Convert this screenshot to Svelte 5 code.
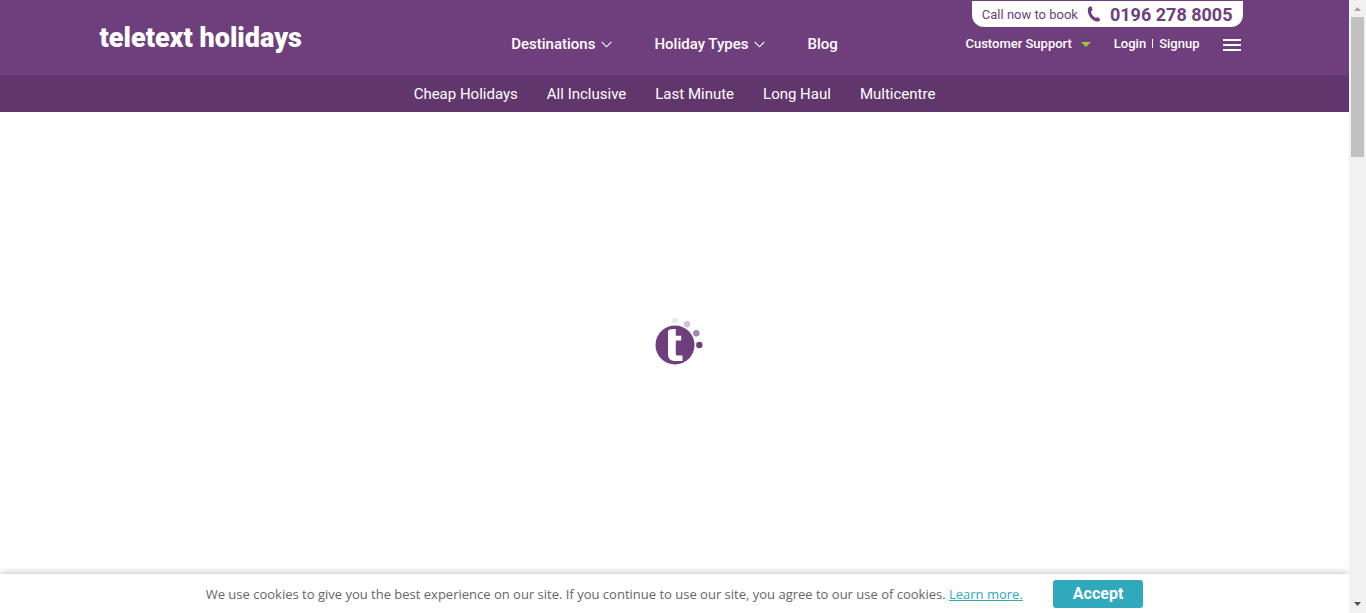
<script>
  const mainLinks = [
    { label: 'Destinations', menu: true },
    { label: 'Holiday Types', menu: true },
    { label: 'Blog', menu: false }
  ];
  const subLinks = ['Cheap Holidays', 'All Inclusive', 'Last Minute', 'Long Haul', 'Multicentre'];
</script>

<div class="window">
  <div class="page">
    <header>
      <div class="bar">
        <a class="logo" href="#home">teletext holidays</a>
        <nav class="main-nav" aria-label="Main">
          {#each mainLinks as link}
            <a href="#main">
              {link.label}
              {#if link.menu}
                <svg width="11" height="7" viewBox="0 0 11 7" aria-hidden="true">
                  <path d="M.7.8 5.5 5.8 10.3.8" fill="none" stroke="#fff" stroke-width="1.1" />
                </svg>
              {/if}
            </a>
          {/each}
        </nav>
        <div class="side">
          <a class="call" href="#call">
            <span>Call now to book</span>
            <svg width="14" height="16" viewBox="0 0 14 16" aria-hidden="true">
              <path
                d="M3 .4 4.500.2 5.600 4.200 3.900 5.300C4.100 8 6.200 10.700 8.900 12.100L10.300 10.900 13.300 13.200 12.800 14.600C12 15.700 9.900 15.700 8 14.900 3.700 13.100.8 8.500.8 4.200.8 2.200 1.600.8 3 .4Z"
                fill="#6f3e7c"
              />
            </svg>
            <strong>0196 278 8005</strong>
          </a>
          <div class="account">
            <a class="support" href="#support">
              Customer Support
              <svg width="10" height="5" viewBox="0 0 10 5" aria-hidden="true">
                <path d="M0 0H10L5 5Z" fill="#97c93d" />
              </svg>
            </a>
            <div class="login">
              <a href="#login">Login</a>
              <i></i>
              <a href="#signup">Signup</a>
            </div>
            <button class="menu" type="button" aria-label="Menu"><i></i><i></i><i></i></button>
          </div>
        </div>
      </div>
      <nav class="sub-nav" aria-label="Holidays">
        {#each subLinks as label}
          <a href="#sub">{label}</a>
        {/each}
      </nav>
    </header>

    <main>
      <svg class="loader" width="56" height="56" viewBox="0 0 56 56" role="status" aria-label="Loading">
        <circle cx="28" cy="28" r="19.500" fill="#6f3e7c" />
        <path
          d="M21 15Q21 12.500 24 12.300L28.800 12V18.800H34.200V23.500H28.800V37Q28.800 38.500 30.300 38.500H35.500V44H27.500Q21 43.800 21 37.500Z"
          fill="#fff"
        />
        <circle cx="28" cy="3.700" r="3" fill="#ece7ef" />
        <circle cx="40" cy="7.300" r="3.200" fill="#cfc2d6" />
        <circle cx="49.300" cy="16.200" r="3.200" fill="#a286ae" />
        <circle cx="52.300" cy="28" r="3.200" fill="#6f3e7c" />
      </svg>
    </main>

    <footer>
      <p>
        We use cookies to give you the best experience on our site. If you continue to use our site,
        you agree to our use of cookies. <a href="#cookies">Learn more.</a>
      </p>
      <button class="accept" type="button">Accept</button>
    </footer>
  </div>

  <div class="scrollbar" aria-hidden="true">
    <svg width="17" height="17" viewBox="0 0 17 17"><path d="M5 11H12L8.500 7Z" fill="#a3a3a3" /></svg>
    <div class="track"><div class="thumb"></div></div>
    <svg width="17" height="17" viewBox="0 0 17 17"><path d="M5 6H12L8.500 10Z" fill="#505050" /></svg>
  </div>
</div>

<style>
  :global(body) {
    margin: 0;
    background: #fff;
    font-family: Roboto, 'Open Sans', sans-serif;
  }

  a {
    color: inherit;
    text-decoration: none;
  }

  svg {
    display: block;
    flex: none;
  }

  button {
    border: 0;
    padding: 0;
    font-family: inherit;
    cursor: pointer;
  }

  .window {
    display: flex;
    min-height: 100vh;
  }

  .page {
    flex: 1;
    min-width: 0;
    display: flex;
    flex-direction: column;
  }

  header {
    color: #fff;
    background: #6f3e7c;
  }

  .bar {
    display: grid;
    grid-template-columns: 1fr auto 1fr;
    max-width: 1150px;
    min-height: 75px;
    margin: 0 auto;
  }

  .logo {
    align-self: center;
    justify-self: start;
    font-size: 27px;
    font-weight: 900;
    line-height: 32px;
  }

  .main-nav {
    display: flex;
    align-items: center;
    gap: 42px;
    padding-top: 13px;
    font-size: 15px;
    font-weight: 500;
  }

  .main-nav a {
    display: flex;
    align-items: center;
    gap: 6px;
  }

  .side {
    justify-self: end;
    display: flex;
    flex-direction: column;
    align-items: flex-end;
    padding: 1px 7px 0 0;
  }

  .call {
    display: flex;
    align-items: center;
    gap: 9px;
    height: 26px;
    padding: 0 10px;
    border-radius: 0 0 12px 12px;
    background: #fff;
    color: #6f3e7c;
    font-size: 13px;
  }

  .call strong {
    font-size: 18px;
    line-height: 26px;
    padding-top: 2px;
  }

  .account {
    display: flex;
    align-items: center;
    gap: 23px;
    height: 32px;
    padding-right: 2px;
    font-size: 13px;
    font-weight: 500;
  }

  .support {
    display: flex;
    align-items: center;
    gap: 9px;
  }

  .support svg {
    margin-top: 2px;
  }

  .login {
    display: flex;
    align-items: center;
    gap: 6px;
  }

  .login i {
    width: 1px;
    height: 9px;
    background: #fff;
  }

  .menu {
    display: flex;
    flex-direction: column;
    gap: 3px;
    width: 18px;
    padding-top: 4px;
    background: none;
  }

  .menu i {
    height: 2px;
    background: #fff;
  }

  .sub-nav {
    display: flex;
    justify-content: center;
    gap: 29px;
    padding-top: 2px;
    background: #61366c;
    font-size: 15px;
    line-height: 35px;
  }

  main {
    flex: 1;
    display: grid;
    place-items: center;
    padding-top: 4px;
  }

  footer {
    display: flex;
    align-items: center;
    justify-content: center;
    gap: 30px;
    min-height: 39px;
    background: #fff;
    box-shadow: 0 0 8px rgba(0, 0, 0, 0.3);
    clip-path: inset(-12px 0 0 0);
  }

  footer p {
    margin: 0;
    color: #666;
    font-family: 'Open Sans', sans-serif;
    font-size: 13px;
    line-height: 20px;
  }

  footer p a {
    color: #31a9bc;
    text-decoration: underline;
  }

  .accept {
    height: 28px;
    padding: 0 20px;
    border-radius: 3px;
    background: #31a9bc;
    color: #fff;
    font-size: 16px;
    font-weight: 700;
  }

  .scrollbar {
    display: flex;
    flex-direction: column;
    width: 17px;
    background: #f1f1f1;
  }

  .track {
    flex: 1;
    padding: 0 2px;
  }

  .thumb {
    height: 140px;
    background: #c1c1c1;
  }
</style>
